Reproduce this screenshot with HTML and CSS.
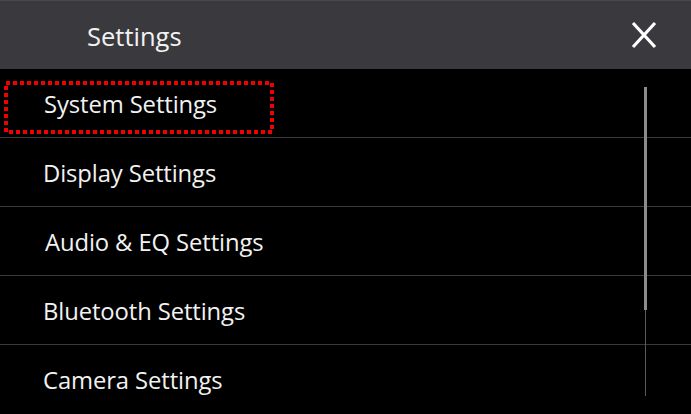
FILE: index.html
```html
<!DOCTYPE html>
<html>
<head>
<meta charset="utf-8">
<link rel="stylesheet" href="styles.css">
</head>
<body>
<div class="screen">
  <header class="header">
    <span class="title">Settings</span>
    <button class="close" aria-label="Close">
      <svg width="26" height="28" viewBox="0 0 26 28"><path d="M2 2 L24 26 M24 2 L2 26" stroke="#fff" stroke-width="3.2" stroke-linecap="butt" fill="none"/></svg>
    </button>
  </header>
  <ul class="list">
    <li class="row focused">
      <span class="label">System Settings</span>
      <svg class="focus" width="270" height="53" viewBox="0 0 270 53"><rect x="2" y="2" width="266" height="49" fill="none" stroke="#f00000" stroke-width="4" stroke-dasharray="4 3"/></svg>
    </li>
    <li class="row"><span class="label">Display Settings</span></li>
    <li class="row"><span class="label indent">Audio &amp; EQ Settings</span></li>
    <li class="row"><span class="label">Bluetooth Settings</span></li>
    <li class="row last"><span class="label">Camera Settings</span></li>
  </ul>
  <div class="scroll">
    <div class="thumb"></div>
  </div>
</div>
</body>
</html>
```
FILE: styles.css
```css
* { box-sizing: border-box; }
html, body { margin: 0; padding: 0; background: #000; }
.screen {
  position: relative;
  width: 691px;
  height: 414px;
  background: #000;
  overflow: hidden;
  font-family: "Open Sans", "Noto Sans", sans-serif;
  color: #f2f2f2;
}
.header {
  height: 69px;
  background: #3a3a3e;
  border-top: 1px solid #4a4a4e;
  display: flex;
  align-items: center;
  justify-content: space-between;
  padding: 0 34px 0 87px;
}
.title { font-size: 25.5px; padding-top: 2px; }
.close {
  background: none; border: 0; padding: 0; margin: 0;
  width: 26px; height: 28px; display: flex;
}
.list { list-style: none; margin: 0; padding: 0; }
.row {
  position: relative;
  height: 69px;
  border-bottom: 1px solid #3a3a3a;
  display: flex;
  align-items: center;
  padding-left: 43px;
}
.row.last { border-bottom: 0; }
.label { font-size: 23.8px; letter-spacing: -0.1px; padding-top: 1px; }
.indent { padding-left: 2px; }
.focused .label { padding-left: 1px; }
.focus { position: absolute; left: 4px; top: 12px; }
.scroll {
  position: absolute;
  left: 644px;
  top: 87px;
  width: 3px;
  height: 309px;
  display: flex;
  justify-content: center;
}
.scroll::before {
  content: "";
  position: absolute;
  left: 1px; top: 0; bottom: 0;
  width: 1px;
  background: #5a5a5a;
}
.thumb {
  position: relative;
  width: 3px;
  height: 223px;
  background: #8c8c8c;
}
```
